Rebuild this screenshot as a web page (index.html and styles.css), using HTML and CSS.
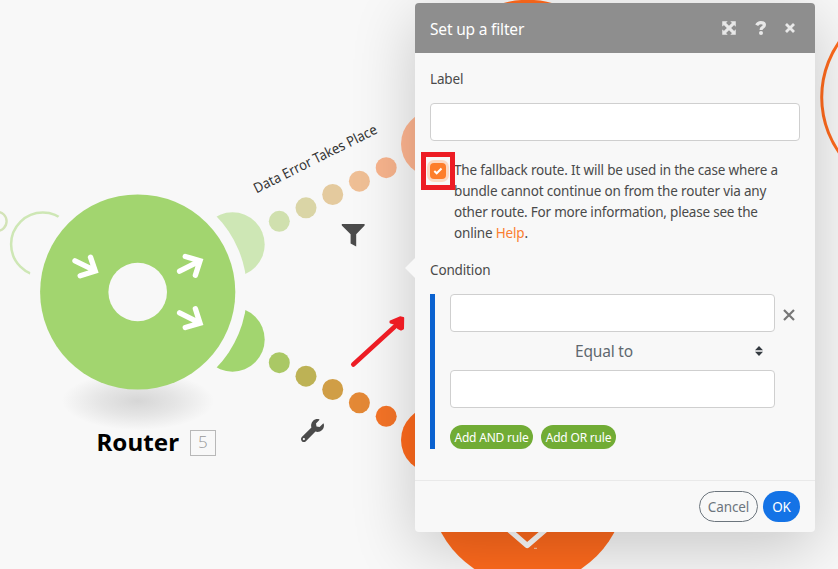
FILE: index.html
```html
<!DOCTYPE html>
<html lang="en">
<head>
<meta charset="utf-8">
<title>Set up a filter</title>
<link rel="stylesheet" href="styles.css">
</head>
<body>
<main class="workspace">
  <svg class="canvas" viewBox="0 0 838 569" width="838" height="569">
    <defs>
      <radialGradient id="ground"><stop offset="0" stop-color="#d6d6d6"/><stop offset=".5" stop-color="#e5e5e5"/><stop offset="1" stop-color="#f8f8f8"/></radialGradient>
    </defs>
    <!-- connectors around the router -->
    <circle cx="-3" cy="221.3" r="9.6" fill="none" stroke="#d3e3b7" stroke-width="2.4"/>
    <circle cx="42.800" cy="244.300" r="31.700" fill="none" stroke="#cee7b5" stroke-width="2.500"/>
    <circle cx="232.5" cy="244.5" r="32.2" fill="#cee7b5"/>
    <circle cx="232.5" cy="339.5" r="32.2" fill="#a2d56f"/>
    <circle cx="137.7" cy="292" r="109.3" fill="#f8f8f8"/>
    <ellipse cx="138" cy="401" rx="76" ry="29" fill="url(#ground)"/>
    <!-- router -->
    <circle cx="137.7" cy="292" r="97.6" fill="#a2d56f"/>
    <circle cx="137.7" cy="292" r="29.3" fill="#f8f8f8"/>
    <g class="arrows">
      <path d="M75 260.8 94.5 270.4M90.5 257.2 95.200 271 80.2 275.8"/>
      <path d="M179.6 271.2 199 261.3M185.3 256.5 200 260.8 195.4 275.2"/>
      <path d="M179.6 312.8 199 322.7M195.4 308.8 200 323.2 185.3 327.5"/>
    </g>
    <text class="router-name" x="96.5" y="450.5" textLength="82.5" lengthAdjust="spacingAndGlyphs">Router</text>
    <rect x="190.5" y="430.5" width="25" height="25" fill="none" stroke="#b8b8b8"/>
    <text class="router-number" x="198" y="448">5</text>
    <!-- upper route -->
    <g>
      <circle cx="279.3" cy="221.3" r="10.5" fill="#d0e0ae"/>
      <circle cx="306" cy="207.8" r="10.5" fill="#dad5a6"/>
      <circle cx="332.7" cy="194.5" r="10.5" fill="#e4ca9e"/>
      <circle cx="359.4" cy="181.2" r="10.5" fill="#efbf95"/>
      <circle cx="386.2" cy="167.7" r="10.5" fill="#f8b48d"/>
      <circle cx="434" cy="144" r="33" fill="#ffb691"/>
    </g>
    <text class="route-name" transform="translate(256.500 193.500) rotate(-26.500)" textLength="136" lengthAdjust="spacingAndGlyphs">Data Error Takes Place</text>
    <path d="M341.8 224H364.6V225.5L356.2 234.3V246.6L350.6 243.6V234.3L341.8 225.5Z" fill="#4b4b4b"/>
    <!-- lower route -->
    <g>
      <circle cx="279.3" cy="362.7" r="10.5" fill="#aac865"/>
      <circle cx="306" cy="376.2" r="10.5" fill="#bdb255"/>
      <circle cx="332.7" cy="389.5" r="10.5" fill="#d09e46"/>
      <circle cx="359.4" cy="402.8" r="10.5" fill="#e48936"/>
      <circle cx="386.2" cy="416.3" r="10.5" fill="#f57427"/>
      <circle cx="434" cy="440" r="33" fill="#ff6a1d"/>
    </g>
    <path class="wrench" transform="translate(301 419) scale(.0449)" d="M507.73 109.1c-2.24-9.03-13.54-12.09-20.12-5.51l-74.36 74.36-67.88-11.31-11.31-67.88 74.36-74.36c6.62-6.62 3.43-17.9-5.66-20.16-47.38-11.74-99.55.91-136.58 37.93-39.64 39.64-50.55 97.1-34.05 147.2L18.74 402.76c-24.99 24.99-24.99 65.51 0 90.5 24.99 24.99 65.51 24.99 90.5 0l213.21-213.21c50.12 16.71 107.47 5.68 147.37-34.22 37.07-37.07 49.7-89.32 37.91-136.73zM64 472c-13.25 0-24-10.75-24-24 0-13.26 10.75-24 24-24s24 10.74 24 24c0 13.25-10.75 24-24 24z"/>
    <!-- modules behind the panel -->
    <circle cx="527.7" cy="97.5" r="97.7" fill="#ff6a1d"/>
    <circle cx="527.7" cy="487" r="97.7" fill="#ff6a1d"/>
    <path d="M503 524.5 527.2 545.500 551.5 524.5" fill="none" stroke="#fff" stroke-width="5.500" stroke-linejoin="round"/>
    <path d="M534 548.3h3" stroke="#ffd0b5" stroke-width="1"/>
    <circle cx="918" cy="97.3" r="96.3" fill="none" stroke="#ff6a1d" stroke-width="3"/>
  </svg>

  <section class="panel">
    <header class="panel-head">
      <h1 class="panel-title">Set up a filter</h1>
      <div class="tools">
        <svg width="14" height="14" viewBox="0 0 14 14"><path d="M.5.5H5.200L3.800 1.900 7 5.100 10.200 1.900 8.800.5h4.700V5.200L12.100 3.800 8.900 7l3.200 3.200L13.500 8.800v4.700H8.800l1.400-1.400L7 8.900 3.800 12.100 5.200 13.500H.5V8.800l1.400 1.400L5.100 7 1.900 3.800.5 5.200Z" fill="#e8e8e8" stroke="#e8e8e8" stroke-width=".5"/></svg>
        <svg width="12" height="14" viewBox="0 0 12 14"><path d="M1.700 4.300Q3 1.600 5.900 1.600 9.400 1.600 9.400 4.100 9.400 5.600 7.400 6.700 6.100 7.400 6.100 9" fill="none" stroke="#e8e8e8" stroke-width="3.200"/><circle cx="6" cy="12" r="2" fill="#e8e8e8"/></svg>
        <svg class="close" width="10" height="10" viewBox="0 0 10 10"><path d="M1 1 9 9M9 1 1 9" stroke="#e8e8e8" stroke-width="2.800"/></svg>
      </div>
    </header>

    <div class="panel-body">
      <div class="field-name first">Label</div>
      <div class="input"></div>
      <div class="fallback">
        <span class="check"><svg width="10" height="8" viewBox="0 0 10 8"><path d="M1.300 4 3.700 6.300 8.500 1.500" fill="none" stroke="#fff" stroke-width="2"/></svg></span>
        <p class="hint"><span class="l1">The fallback route. It will be used in the case where a</span><br><span class="l2">bundle cannot continue on from the router via any</span><br><span class="l3">other route. For more information, please see the</span><br><span class="l4">online <a class="link">Help</a>.</span></p>
      </div>
      <div class="field-name condition-name">Condition</div>
      <div class="condition">
        <div class="operand">
          <div class="input"></div>
          <svg class="remove" width="12" height="12" viewBox="0 0 12 12"><path d="M1 1 11 11M11 1 1 11" stroke="#777" stroke-width="2.200"/></svg>
        </div>
        <div class="operator"><span>Equal to</span><svg width="8" height="10" viewBox="0 0 8 10"><path d="M0 4.200 4 0 8 4.200ZM0 5.800H8L4 10Z" fill="#343a40"/></svg></div>
        <div class="operand"><div class="input"></div></div>
        <div class="rules"><span class="rule rule-and">Add AND rule</span><span class="rule rule-or">Add OR rule</span></div>
      </div>
    </div>

    <footer class="panel-foot">
      <span class="btn btn-cancel">Cancel</span><span class="btn btn-ok">OK</span>
    </footer>
  </section>

  <div class="mark"></div>
  <svg class="pointer" width="56" height="54" viewBox="0 0 56 54"><path d="M3.300 49.500 46 10.500" stroke="#ed1c24" stroke-width="4.600" stroke-linecap="round"/><path d="M40.500 6.500 50 2.300 53.200 3 53 13.500 51 14.500 48 13 46 9 40.500 7.500Z" fill="#ed1c24" stroke="#ed1c24" stroke-width="2" stroke-linejoin="round"/></svg>
</main>
</body>
</html>
```
FILE: styles.css
```css
* { box-sizing: border-box; }
body { margin: 0; font-family: "Noto Sans", "Open Sans", sans-serif; color: #4a4a4a; background: #f8f8f8; }
.workspace { position: relative; width: 838px; height: 569px; overflow: hidden; }
.canvas { display: block; }
.arrows path { fill: none; stroke: #fff; stroke-width: 5.4; stroke-linecap: round; stroke-linejoin: miter; }
.router-name { font-size: 24px; font-weight: 700; fill: #000; }
.router-number { font-family: "Open Sans", sans-serif; font-size: 17px; font-weight: 300; fill: #999; }
.route-name { font-size: 14px; fill: #333; }
.wrench { fill: #4b4b4b; }

.panel { position: absolute; left: 415px; top: 3px; width: 400px; height: 529px; display: flex; flex-direction: column; background: #f8f8f8; border-radius: 4px; box-shadow: 0 16px 64px rgba(0, 0, 0, .2); }
.panel::before { content: ""; position: absolute; left: -10px; top: 255px; border: 10px solid transparent; border-left: 0; border-right-color: #f8f8f8; }
.panel-head { height: 50px; padding: 0 20px 0 15px; display: flex; align-items: center; justify-content: space-between; background: #8e8e8e; border-radius: 4px 4px 0 0; }
.panel-title { margin: 1px 0 0; font-size: 15.5px; font-weight: 400; line-height: 22px; letter-spacing: -.18px; color: #fff; }
.tools { display: flex; align-items: center; gap: 19px; }
.tools .close { margin-left: -1px; }
.panel-body { flex: 1; padding: 15px 15px 0; }
.field-name { height: 21px; font-size: 13.5px; line-height: 21px; letter-spacing: -.15px; }
.field-name.first { line-height: 23px; }
.input { height: 38px; flex: none; background: #fff; border: 1px solid #cfcfcf; border-radius: 4px; }
.field-name + .input { margin-top: 14px; }
.fallback { display: flex; gap: 8px; margin-top: 19px; }
.check { flex: none; display: flex; align-items: center; justify-content: center; width: 16px; height: 16px; margin-top: 3px; border-radius: 4px; background: #fd7e2b; box-shadow: 0 0 0 3px #fcd9c2; }
.hint { margin: 0; font-size: 13.5px; line-height: 21px; white-space: nowrap; letter-spacing: -.18px; }
.l2 { letter-spacing: -.17px; }
.l3 { letter-spacing: -.21px; }
.link { color: #fb7e30; }
.condition-name { margin-top: 16px; }
.condition { width: 370px; height: 155px; margin-top: 13px; padding-left: 15px; border-left: 5px solid #0b62d0; }
.operand { display: flex; align-items: center; gap: 8px; }
.operand .input { width: 325px; }
.remove { margin-top: 4px; }
.operator { width: 325px; height: 38px; padding: 0 12px; display: flex; align-items: center; font-size: 15.5px; color: #5f686f; letter-spacing: -.2px; }
.operator span { flex: 1; padding-right: 9px; text-align: center; }
.rules { display: flex; gap: 8px; margin-top: 17px; }
.rule { height: 24px; border-radius: 12px; background: #71ac35; color: #fff; font-size: 12px; line-height: 25px; text-align: center; white-space: nowrap; letter-spacing: -.2px; }
.rule-and { width: 83px; }
.rule-or { width: 75px; }
.panel-foot { height: 52px; padding: 10px 15px; display: flex; justify-content: flex-end; gap: 5px; border-top: 1px solid #e9e9e9; }
.btn { height: 31px; border-radius: 16px; font-size: 13.5px; line-height: 32px; text-align: center; letter-spacing: -.1px; }
.btn-cancel { width: 59px; border: 1px solid #6c757d; color: #6c757d; line-height: 31px; }
.btn-ok { width: 37px; background: #1473e6; color: #fff; }
.mark { position: absolute; left: 421px; top: 152px; width: 34px; height: 38px; border: 5px solid #ed1c24; }
.pointer { position: absolute; left: 350px; top: 315px; }
```
